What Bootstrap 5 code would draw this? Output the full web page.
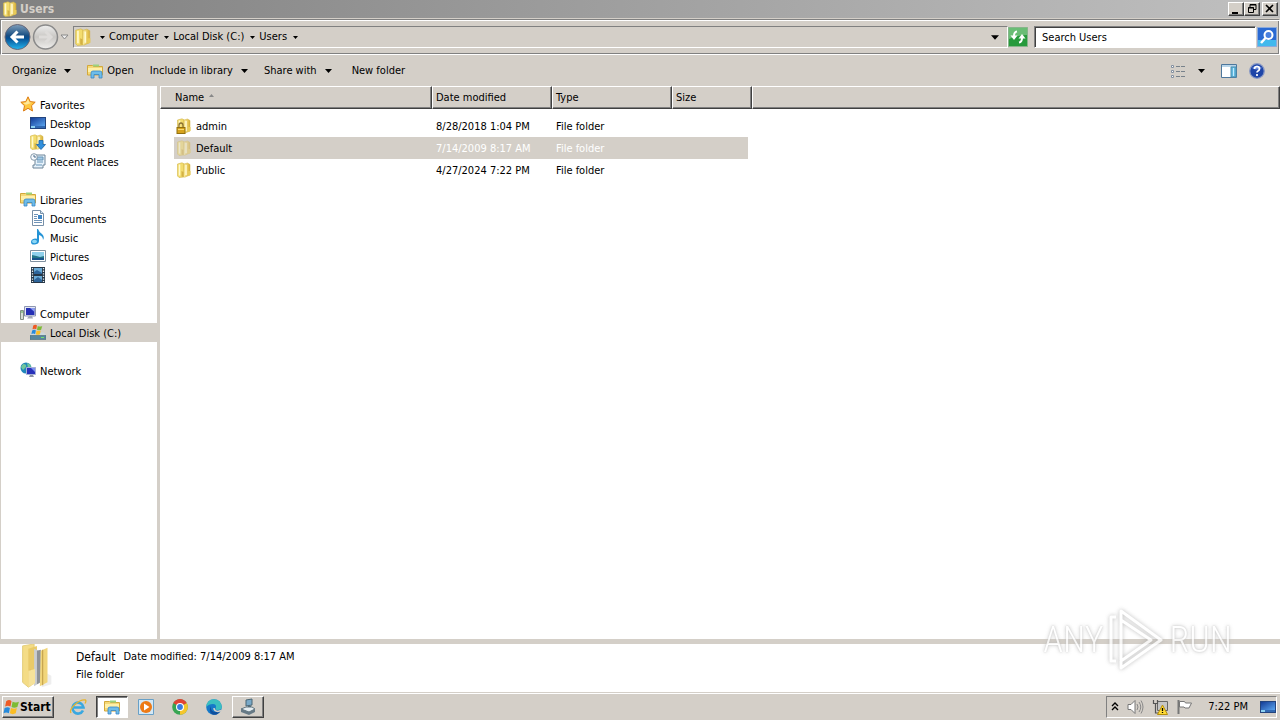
<!DOCTYPE html>
<html lang="en">
<head>
<meta charset="utf-8">
<meta name="viewport" content="width=device-width, initial-scale=1">
<title>Users</title>
<link rel="stylesheet" href="https://cdn.jsdelivr.net/npm/bootstrap@5.3.0/dist/css/bootstrap.min.css">
<style>
:root{--face:#d4cfc8;--dark:#808080;--ink:#404040}
body{font-family:"DejaVu Sans Condensed","DejaVu Sans",sans-serif;font-stretch:condensed;font-size:11px;line-height:16px;color:#000;background:var(--face);overflow:hidden}
svg{display:block;flex:none}
a{color:#000;text-decoration:none}
button{font:inherit;color:#000;background:none;border:0;padding:0;white-space:nowrap}
.i16{width:16px;height:16px}
.title-strip{height:18px;background:linear-gradient(90deg,#808080,#c0c0c0);padding:0 2px}
.title-strip h1{font-size:12px;line-height:18px;font-weight:700;color:var(--face);margin-left:2px}
.win-btn{width:16px;height:14px;background:var(--face);border:1px solid;border-color:#fff var(--ink) var(--ink) #fff;box-shadow:inset -1px -1px var(--dark)}
.win-close{margin-left:2px}
.address-row{height:36px;margin-top:1px;border:1px solid;border-color:var(--dark) #fff #fff var(--dark);box-shadow:inset 1px 1px #fff,inset -1px -1px var(--dark);padding:0 2px 0 3px}
.crumbs{height:22px;border:1px solid;border-color:var(--dark) #fff #fff var(--dark);margin-left:4px}
.crumbs ol{list-style:none;gap:2px}
.crumbs li{gap:4px}
.search-box{width:222px;height:22px;margin:0 1px 0 6px;font:inherit;color:#000;background:#fff;border:1px solid;border-color:var(--dark) #fff #fff var(--dark);box-shadow:inset 1px 1px var(--ink);padding:0 7px;outline:0}
.search-box::placeholder{color:#000;opacity:1}
.command-row{height:31px;padding:0 15px 0 12px}
.view-btn{gap:12px}
.side-pane{width:160px;background:#fff;border-right:3px solid var(--face);padding-top:9px;box-shadow:inset 1px 0 var(--face)}
.side-pane ul{list-style:none;margin:0 0 19px;padding:0}
.side-pane a{display:flex;align-items:center;gap:4px;height:19px;padding:2px 0 0 19px;margin-left:1px}
.side-pane li li a{padding-left:29px}
.side-pane a svg{margin-bottom:3px}
.side-pane ul ul{margin:0}
.side-pane a.picked{background:var(--face);margin-right:-1px}
.file-pane{background:#fff}
.files{width:100%;table-layout:fixed;border-collapse:separate;border-spacing:0}
.files th{height:23px;background:var(--face);font-weight:400;padding:1px 3px 0;border:1px solid;border-color:#fff var(--ink) var(--ink) #fff;box-shadow:inset -1px -1px var(--dark)}
.files th:first-child{padding-left:14px}
.files tbody::before{content:"";display:block;height:6px}
.files td{height:22px;padding:2px 4px 0;background-clip:padding-box}
.files td svg{margin-bottom:2px}
.files td:first-child{border-left:14px solid transparent;padding-left:2px}
.files td:nth-child(4){border-right:4px solid transparent}
.files .picked td:nth-child(-n+4){background-color:var(--face)}
.files .picked td+td{color:#fff}
.details-pane{height:53px;background:#fff;border-top:5px solid var(--face);padding-left:16px;line-height:18px}
.item-name{font-size:12px}
.task-row{height:27px;margin-top:1px;border-top:1px solid #fff;padding:2px 3px 0 2px}
.task-list{gap:2px}
.raised{border:1px solid;border-color:#fff var(--ink) var(--ink) #fff;box-shadow:inset -1px -1px var(--dark)}
.sunken{border:1px solid;border-color:var(--ink) #fff #fff var(--ink);box-shadow:inset 1px 1px var(--dark);background:#fff}
.start-btn{width:52px;height:22px;font-size:12px;font-weight:700}
.task-btn{width:32px;height:22px}
.tray{height:22px;border:1px solid;border-color:var(--dark) #fff #fff var(--dark);padding:0 0 0 4px}
.brand-mark{position:absolute;right:48px;bottom:44px;height:72px;gap:4px;font-family:Roboto,sans-serif;font-weight:300;font-size:36px;line-height:72px;color:#fff;text-shadow:0 0 2px #bbb,0 0 4px #bbb;opacity:.8;pointer-events:none}
.brand-mark svg{filter:drop-shadow(0 0 2px #aaa)}
</style>
</head>
<body class="vh-100 d-flex flex-column position-relative">
<svg width="0" height="0" class="position-absolute" aria-hidden="true">
<defs>
<linearGradient id="gy" x2="1"><stop stop-color="#fff3a8"/><stop offset="1" stop-color="#d9b034"/></linearGradient>
<linearGradient id="gb" x2="0" y2="1"><stop stop-color="#7f9fbb"/><stop offset=".45" stop-color="#174d82"/><stop offset=".55" stop-color="#064f93"/><stop offset="1" stop-color="#24b6ef"/></linearGradient>
<linearGradient id="gs" x2="1" y2="1"><stop stop-color="#143c96"/><stop offset="1" stop-color="#5aa4ee"/></linearGradient>
<linearGradient id="gg" x2="0" y2="1"><stop stop-color="#eee"/><stop offset=".5" stop-color="#c9c7c4"/><stop offset="1" stop-color="#f0efed"/></linearGradient>
</defs>
<symbol id="folder" viewBox="0 0 16 16"><path d="M1.500 2L6 .8l2 1V15l-5 .5-1.500-1.500z" fill="#f3dc6d" stroke="#d2b64a" stroke-width=".6"/><path d="M8 2l3.500-1L14 2.500V13l-5.500 2.300-1-1z" fill="url(#gy)" stroke="#cfae40" stroke-width=".5"/><path d="M3.500 2.500v11M10 3v10" stroke="#fff9cf" stroke-width="1.500"/><path d="M5.500 9l2 1v5l-2-.5z" fill="#d4b144"/><path d="M12 9h2.500v4L12 14z" fill="#e8cb58"/></symbol>
<symbol id="lock" viewBox="0 0 16 16"><use href="#folder"/><path d="M3 9.500V7.500a2 2.500 0 014 0v2" fill="none" stroke="#8c7335" stroke-width="1.300"/><rect x="1" y="9.500" width="8" height="6" fill="#d7a31c" stroke="#92700e"/><path d="M2 11.500h6" stroke="#f7da72"/></symbol>
<symbol id="lib" viewBox="0 0 16 16"><path d="M.5 2.500h5l1 1h9V12H.5z" fill="#f5d978" stroke="#d3a83a"/><path d="M1 5h14v4H1z" fill="#fff0a9"/><path d="M6 1.500h6v2H6z" fill="#9bd37f"/><path d="M4 15v-5q0-2 2-2h7q2 0 2 2v5h-3v-3.500H7V15z" fill="#6fbde9" stroke="#3787c5" stroke-width=".8"/></symbol>
<symbol id="star" viewBox="0 0 16 16"><path d="M8 .8l2.200 4.800 5 .6-3.700 3.500 1 5.300L8 12.300 3.500 15l1-5.300L.8 6.200l5-.6z" fill="#ffc840" stroke="#dc7b13"/><path d="M8 3l1.500 3.500 2.500.3-6 2L3 7l3-.5z" fill="#ffe89b"/></symbol>
<symbol id="desk" viewBox="0 0 16 16"><path d="M0 2h16v12H0z" fill="#23447e"/><path d="M1 3h14v8H1z" fill="url(#gs)"/><path d="M1 11h14v2H1z" fill="#3269b2"/><path d="M1 11h4v2H1z" fill="#8bd0f1"/></symbol>
<symbol id="down" viewBox="0 0 16 16"><use href="#folder" width="16" height="16" x="-1"/><path d="M9 6.500h4v4h2.500l-4.500 5-4.500-5H9z" fill="#3290dd" stroke="#1a63a9" stroke-width=".8"/></symbol>
<symbol id="recent" viewBox="0 0 16 16"><path d="M5 2h10v10h-2v3H3v-3h2z" fill="#e6f2fb" stroke="#6d8498"/><path d="M7 4h6v3H7zM7 9h6M6 12h6" fill="#a4cae5" stroke="#6794b7"/><circle cx="4" cy="4" r="3.300" fill="#f8fbff" stroke="#879baa"/><path d="M4 2v2h2" fill="none" stroke="#496b88"/></symbol>
<symbol id="doc" viewBox="0 0 16 16"><path d="M2.500.5h8l3 3v12h-11z" fill="#fff" stroke="#7890a8"/><path d="M10.500.5v3h3" fill="#d5e5f2" stroke="#7890a8"/><path d="M4 4.500h4M4 6.500h3M4 8.500h3M4 10.500h8M4 12.500h8" stroke="#6f93b8"/><path d="M8 5h4v4H8z" fill="#3f86c6"/></symbol>
<symbol id="music" viewBox="0 0 16 16"><path d="M8 0q1 3 4 5 3 3 1 6 0-4-4-5v6q0 3-4 3.500T1 13q0-3 4-3.500l2 .3V0z" fill="#2594d6"/><ellipse cx="4.500" cy="12.500" rx="2.500" ry="1.700" fill="#8cd7f5"/></symbol>
<symbol id="pic" viewBox="0 0 16 16"><path d="M.5 2.500h15v11H.5z" fill="#fff" stroke="#8091a0"/><path d="M2 4h12v8H2z" fill="#8fd0ec"/><path d="M2 7q5 1 8 2l4-1v4H2z" fill="#237688"/><path d="M2 10h12v2H2z" fill="#18538c"/></symbol>
<symbol id="video" viewBox="0 0 16 16"><path d="M1 0h14v16H1z" fill="#263747"/><path d="M4 1h8v6H4zM4 9h8v6H4z" fill="#6aabd7"/><path d="M4 5l3-2 5 3v1H4zM4 13l4-3 4 3v2H4z" fill="#2e659a"/><path d="M2.500 1v14M13.500 1v14" stroke="#e5edf2" stroke-width="1.300" stroke-dasharray="1.300 1.300"/></symbol>
<symbol id="pc" viewBox="0 0 16 16"><path d="M.5 5.500h3v9h-3z" fill="#d7ddd6" stroke="#818e84"/><path d="M1 7h2" stroke="#53ac52"/><path d="M4.500 1.500h11v9.500h-11z" fill="#e5e8f3" stroke="#8d96b1"/><path d="M6 3h8.500v7H6z" fill="#2530b5"/><path d="M10 3h4.500v4z" fill="#8b9cf0"/><path d="M9 11h3l1 2.500H7z" fill="#a2a8b7"/></symbol>
<symbol id="flag" viewBox="0 0 16 16"><path d="M3 2q3-2 5 0L7 7Q4.500 5.500 2 7z" fill="#ee5a24"/><path d="M9 2.500q3 1.500 6 0l-1.500 5q-3 1.500-5.500 0z" fill="#7dbb35"/><path d="M1.500 8.500q3-1.500 5 0l-1 5q-2.500-1.500-5 0z" fill="#278adb"/><path d="M7.500 8.500q3 1.500 5.500 0l-1 5q-3 1.500-5.500 0z" fill="#fbbd24"/></symbol>
<symbol id="disk" viewBox="0 0 16 16"><path d="M2 8.500h12l2 3H0z" fill="#cfd8dd"/><path d="M0 11.500h16v4H0z" fill="#58869d" stroke="#456878" stroke-width=".6"/><path d="M11 13.500h3" stroke="#76e16b"/><use href="#flag" x="1" width="12" height="12"/></symbol>
<symbol id="net" viewBox="0 0 16 16"><circle cx="6" cy="6" r="5.500" fill="#2186ba"/><path d="M3 2q4 0 3 3L3 8 1 5zM7 1l4 2-1 4-2-1z" fill="#71c79c"/><path d="M6.500 5.500h9v7h-9z" fill="#2731ba" stroke="#a7b0d5"/><path d="M11 6h4v4z" fill="#7c90f0"/><path d="M10 13h3l1 2H9z" fill="#8c93a5"/></symbol>
<symbol id="tri" viewBox="0 0 7 4"><path d="M0 0h7L3.500 4z"/></symbol>
</svg>

<header>
  <div class="title-strip d-flex align-items-center">
    <svg class="i16"><use href="#folder"/></svg>
    <h1 class="mb-0 me-auto">Users</h1>
    <button class="win-btn" aria-label="Minimize"><svg width="14" height="12"><path d="M3 9h6v2H3z"/></svg></button>
    <button class="win-btn" aria-label="Restore"><svg width="14" height="12" fill="none" stroke="#000"><path d="M5 4V1.500h6v5H9M5 2h6M3.500 4.500h5v5h-5zM3 5h6"/></svg></button>
    <button class="win-btn win-close" aria-label="Close"><svg width="14" height="12"><path d="M3 2l7 7m0-7l-7 7" stroke="#000" stroke-width="1.600"/></svg></button>
  </div>
  <div class="address-row d-flex align-items-center">
    <button aria-label="Back"><svg width="28" height="28" viewBox="0 0 28 28"><circle cx="13.500" cy="14" r="12.500" fill="url(#gb)" stroke="#667"/><path d="M20 14H8M13.500 8.500L8 14l5.500 5.500" fill="none" stroke="#fff" stroke-width="3"/></svg></button>
    <button aria-label="Forward"><svg width="28" height="28" viewBox="0 0 28 28"><circle cx="13.500" cy="14" r="12" fill="url(#gg)" stroke="#8a8a8a" stroke-width="1.500"/><path d="M7 14h12M13.500 8.500L19 14l-5.500 5.500" fill="none" stroke="#dedcda" stroke-width="3"/></svg></button>
    <button aria-label="Recent pages"><svg width="9" height="8"><path d="M1 2h7L4.500 6z" fill="#eee" stroke="#888"/></svg></button>
    <nav class="crumbs d-flex align-items-center flex-grow-1 pe-2" aria-label="Address">
      <svg width="18" height="18"><use href="#folder"/></svg>
      <ol class="d-flex align-items-center m-0 ps-1 me-auto">
        <li class="d-flex align-items-center"><svg width="5" height="3" class="ms-1"><use href="#tri"/></svg><a href="#">Computer</a></li>
        <li class="d-flex align-items-center"><svg width="5" height="3" class="ms-1"><use href="#tri"/></svg><a href="#">Local Disk (C:)</a></li>
        <li class="d-flex align-items-center"><svg width="5" height="3" class="ms-1"><use href="#tri"/></svg><a href="#">Users</a></li>
        <li><svg width="5" height="3" class="ms-1"><use href="#tri"/></svg></li>
      </ol>
      <button aria-label="Previous locations"><svg width="8" height="5"><use href="#tri"/></svg></button>
    </nav>
    <button aria-label="Refresh"><svg width="20" height="20"><path d="M.5.500h19v19H.5z" fill="#279a3c" stroke="#87b58b"/><path d="M1 1h18v7q-9 0-18 4z" fill="#6abd75"/><path d="M9 4.500Q6 5 6 9" fill="none" stroke="#fff" stroke-width="2"/><path d="M2.500 8.500h7L6 13z" fill="#fff"/><path d="M11 15.500q3-.5 3-4.500" fill="none" stroke="#fff" stroke-width="2"/><path d="M10.500 11.500h7L14 7z" fill="#fff"/></svg></button>
    <input class="search-box" type="search" placeholder="Search Users" aria-label="Search Users">
    <button aria-label="Search"><svg width="20" height="20"><path d="M.5.500h19v19H.5z" fill="#2a69d2" stroke="#8baadb"/><path d="M1 13h18v6H1z" fill="#42b9ed"/><circle cx="11.500" cy="8" r="4" fill="#497fdf" stroke="#fff" stroke-width="2"/><path d="M8.500 11L4 16" stroke="#fff" stroke-width="2.500"/></svg></button>
  </div>
  <div class="command-row d-flex align-items-center">
    <button class="d-flex align-items-center gap-2">Organize<svg width="7" height="4"><use href="#tri"/></svg></button>
    <button class="d-flex align-items-center gap-1 ms-3"><svg class="i16"><use href="#lib"/></svg>Open</button>
    <button class="d-flex align-items-center gap-2 ms-3">Include in library<svg width="7" height="4"><use href="#tri"/></svg></button>
    <button class="d-flex align-items-center gap-2 ms-3">Share with<svg width="7" height="4"><use href="#tri"/></svg></button>
    <button class="ms-3 ps-1 me-auto">New folder</button>
    <button class="view-btn d-flex align-items-center" aria-label="Change your view"><svg class="i16" fill="none"><path d="M1.500 2.500h2v2h-2zM1.500 7.500h2v2h-2zM1.500 12.500h2v2h-2z" fill="#fff" stroke="#8390a0"/><path d="M6 3.500h4m1 0h4M6 8.500h4m1 0h4M6 13.500h4m1 0h4" stroke="#78828b"/></svg><svg width="7" height="4"><use href="#tri"/></svg></button>
    <button class="ms-3" aria-label="Show the preview pane"><svg class="i16"><path d="M.5 1.500h15v13H.5z" fill="#fff" stroke="#4d779c"/><path d="M1 2h14v2H1z" fill="#b8d5e9"/><path d="M10 4h5v10h-5z" fill="#63b9df" stroke="#4b8eaf"/><path d="M12.500 5v8" stroke="#c2eaff"/></svg></button>
    <button class="ms-2 ps-1" aria-label="Help"><svg class="i16"><circle cx="8" cy="8" r="7.300" fill="#1e45a8" stroke="#8a9ac5" stroke-width="1.300"/><path d="M3 5q5-5 10 0-5 3-10 0" fill="#6d8ddc"/><path d="M5.500 6q0-2.500 2.500-2.500T10.500 6q0 1-1.500 2-1 .6-1 1.500M8 11v2" fill="none" stroke="#fff" stroke-width="1.700"/></svg></button>
  </div>
</header>

<main class="d-flex flex-grow-1">
  <nav class="side-pane flex-shrink-0" aria-label="Folders">
    <ul><li><a href="#"><svg class="i16"><use href="#star"/></svg>Favorites</a>
      <ul><li><a href="#"><svg class="i16"><use href="#desk"/></svg>Desktop</a></li><li><a href="#"><svg class="i16"><use href="#down"/></svg>Downloads</a></li><li><a href="#"><svg class="i16"><use href="#recent"/></svg>Recent Places</a></li></ul></li></ul>
    <ul><li><a href="#"><svg class="i16"><use href="#lib"/></svg>Libraries</a>
      <ul><li><a href="#"><svg class="i16"><use href="#doc"/></svg>Documents</a></li><li><a href="#"><svg class="i16"><use href="#music"/></svg>Music</a></li><li><a href="#"><svg class="i16"><use href="#pic"/></svg>Pictures</a></li><li><a href="#"><svg class="i16"><use href="#video"/></svg>Videos</a></li></ul></li></ul>
    <ul><li><a href="#"><svg class="i16"><use href="#pc"/></svg>Computer</a>
      <ul><li><a href="#" class="picked"><svg class="i16"><use href="#disk"/></svg>Local Disk (C:)</a></li></ul></li></ul>
    <ul><li><a href="#"><svg class="i16"><use href="#net"/></svg>Network</a></li></ul>
  </nav>
  <section class="file-pane flex-grow-1">
    <table class="files">
      <colgroup><col style="width:272px"><col style="width:120px"><col style="width:120px"><col style="width:80px"><col></colgroup>
      <thead><tr><th scope="col"><span class="d-flex align-items-start gap-1">Name<svg width="7" height="8" class="mt-1"><path d="M1 3h5L3.500 0z" fill="#888"/></svg></span></th><th scope="col">Date modified</th><th scope="col">Type</th><th scope="col">Size</th><th aria-hidden="true"></th></tr></thead>
      <tbody>
        <tr><td><span class="d-flex align-items-center gap-1"><svg class="i16"><use href="#lock"/></svg>admin</span></td><td>8/28/2018 1:04 PM</td><td>File folder</td><td></td><td></td></tr>
        <tr class="picked"><td><span class="d-flex align-items-center gap-1"><svg class="i16 opacity-50"><use href="#folder"/></svg>Default</span></td><td>7/14/2009 8:17 AM</td><td>File folder</td><td></td><td></td></tr>
        <tr><td><span class="d-flex align-items-center gap-1"><svg class="i16"><use href="#folder"/></svg>Public</span></td><td>4/27/2024 7:22 PM</td><td>File folder</td><td></td><td></td></tr>
      </tbody>
    </table>
  </section>
</main>

<section class="details-pane d-flex align-items-start" aria-label="Details">
  <svg width="40" height="46" viewBox="0 0 40 48"><path d="M36 33v9l-10 3V28z" fill="#eee"/><path d="M6 2l12-2v40l-6 5-6-5z" fill="#f4dc86" stroke="#e3cd7b"/><path d="M12 5l9-3v38l-9 5z" fill="#e9ca68"/><path d="M18 5l5 2v34l-5 3z" fill="#cacdd0"/><path d="M21 7l4-1v34l-4 2z" fill="#8e9297"/><path d="M25 7l7-3v36l-8 4z" fill="#f1d57a"/><path d="M27 6v37M14 27v17" stroke="#bb9843"/><path d="M12 28l7-2v15l-7 4z" fill="#f6e29a"/></svg>
  <div class="ms-3 ps-1 pt-1">
    <div class="d-flex align-items-center gap-2"><span class="item-name">Default</span><span>Date modified: 7/14/2009 8:17 AM</span></div>
    <div>File folder</div>
  </div>
</section>

<footer class="task-row d-flex align-items-start">
  <button class="raised start-btn d-flex align-items-center"><svg width="17" height="17"><use href="#flag"/></svg>Start</button>
  <div class="task-list d-flex ms-2">
    <button class="task-btn d-flex align-items-center justify-content-center" aria-label="Internet Explorer"><svg width="18" height="18" viewBox="0 0 18 18" fill="none"><path d="M14 12.500a5.500 5.500 0 11.500-3H5" stroke="#39a8e0" stroke-width="2.600"/><path d="M2 15Q0 12 6 6.500T16.500 2q1 1-.5 3.500" stroke="#e7b52c" stroke-width="1.300"/></svg></button>
    <button class="task-btn sunken d-flex align-items-center justify-content-center" aria-label="File Explorer"><svg class="i16"><use href="#lib"/></svg></button>
    <button class="task-btn d-flex align-items-center justify-content-center" aria-label="Media Player"><svg class="i16"><path d="M.5.500h15v15H.5z" fill="#d4e8f5" stroke="#68a0c7"/><circle cx="8" cy="8" r="6" fill="#ed7a15"/><path d="M6 4.500v7l5.500-3.500z" fill="#fff"/></svg></button>
    <button class="task-btn d-flex align-items-center justify-content-center" aria-label="Chrome"><svg class="i16"><circle cx="8" cy="8" r="7.800" fill="#37a552"/><path d="M8 8L1.200 4A7.900 7.900 0 0114.800 4z" fill="#e24334"/><path d="M8 8l6.800-4A7.900 7.900 0 018 15.800z" fill="#f6c62c"/><circle cx="8" cy="8" r="4" fill="#fff"/><circle cx="8" cy="8" r="2.900" fill="#397ce0"/></svg></button>
    <button class="task-btn d-flex align-items-center justify-content-center" aria-label="Edge"><svg class="i16"><circle cx="8" cy="8" r="7.800" fill="#1679c8"/><path d="M.3 8Q1 0 8 .2T15.800 8q0 3-4 3-3 0-2-2 1-4-3-4T.3 8" fill="#3bbfc0"/><path d="M5 7q-1 6 5 6l4-.6Q11 17 6.500 15.500 2 13 5 7" fill="#0e4f9e"/><path d="M8 9q0 3 4 3.500l3-1" fill="none" stroke="#d4cfc8" stroke-width="1.500"/></svg></button>
    <button class="task-btn raised d-flex align-items-center justify-content-center" aria-label="Device"><svg width="18" height="18"><path d="M7 2l6-1v6l-6 1z" fill="#79a9c8" stroke="#496574"/><path d="M9 8h3v2H9z" fill="#496574"/><path d="M2 11l5-2h6l3 2-6 3z" fill="#e5edf1" stroke="#617580"/><path d="M2 11v3l8 3 6-3v-3l-6 3z" fill="#667985"/></svg></button>
  </div>
  <div class="tray d-flex align-items-center ms-auto">
    <button aria-label="Show hidden icons"><svg width="8" height="12" fill="none" stroke="#000" stroke-width="1.400"><path d="M1 5l3-3 3 3M1 9l3-3 3 3"/></svg></button>
    <button class="ms-2" aria-label="Volume"><svg width="17" height="16" fill="none"><path d="M1 5.500h3l4-4v13l-4-4H1z" fill="#fff" stroke="#777"/><path d="M10 5q2 3 0 6M12 3q3.500 5 0 10M14 1.500q4 6.500 0 13" stroke="#888"/></svg></button>
    <button class="ms-2" aria-label="Network status"><svg class="i16"><path d="M5.500 2.500h10v9h-10z" fill="#c6c6c6" stroke="#666"/><path d="M1.500 1v3.500h4V1M3.500 4v10H8" fill="none" stroke="#555" stroke-width="1.200"/><path d="M10.500 6l5 9.500h-10z" fill="#ffdb35" stroke="#b68e08"/><path d="M10.500 9v3m0 1v1" stroke="#000" stroke-width="1.300"/></svg></button>
    <button class="ms-2" aria-label="Action Center"><svg class="i16"><path d="M2.500 1v14" stroke="#777" stroke-width="2"/><path d="M3.500 2.500h5l1 1.500h6L13 9H9L8 8H3.500z" fill="#fff" stroke="#777"/></svg></button>
    <span class="ms-3">7:22 PM</span>
    <button class="ms-2 ps-1" aria-label="Show desktop"><svg class="i16"><use href="#desk"/></svg></button>
  </div>
</footer>

<div class="brand-mark d-flex align-items-center"><span>ANY</span><svg width="58" height="68" viewBox="0 0 58 68" fill="none" stroke="#fff" stroke-width="3" stroke-linejoin="round"><path d="M9 11H4v44h5M14 54V5l40 29-40 28v-7l30-21-30-20"/></svg><span>RUN</span></div>
<script src="https://cdn.jsdelivr.net/npm/bootstrap@5.3.0/dist/js/bootstrap.bundle.min.js"></script>
</body>
</html>
